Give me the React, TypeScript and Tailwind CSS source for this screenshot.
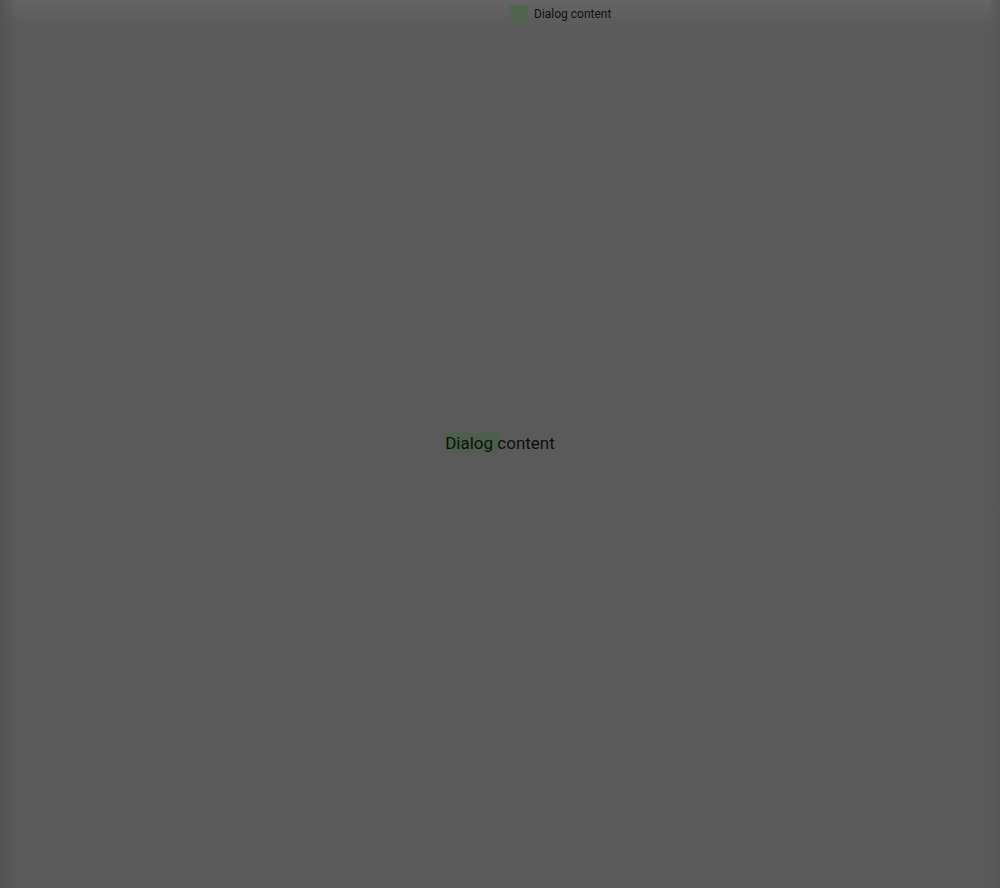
import React from "react";

export default function App() {
  return (
    <div className="relative h-[888px] w-[1000px] overflow-hidden bg-[#5a5a5a] font-['Roboto',sans-serif]">
      <div className="pointer-events-none absolute inset-x-0 top-0 h-[28px] bg-gradient-to-b from-[#656565] to-transparent" />
      <div className="pointer-events-none absolute inset-y-0 left-0 w-[18px] bg-gradient-to-r from-[#535353] to-transparent" />
      <div className="pointer-events-none absolute inset-y-0 right-0 w-[12px] bg-gradient-to-l from-[#575757] to-transparent" />
      <div className="relative flex h-full flex-col">
        <div className="ml-[510px] flex h-[28px] items-center gap-[6px]">
          <div className="h-[18px] w-[18px] rounded-[3px] bg-[#4f654e]" />
          <span className="text-[12px] text-[#111]">Dialog content</span>
        </div>
        <div className="flex flex-1 items-center justify-center pb-[30px]">
          <p className="text-[17px] leading-[21px] text-[#0f0f0f]">
            <span className="mr-[-6px] bg-[#4b5f4a] pr-[6px]">Dialog</span>
            <span className="relative"> content</span>
          </p>
        </div>
      </div>
    </div>
  );
}
